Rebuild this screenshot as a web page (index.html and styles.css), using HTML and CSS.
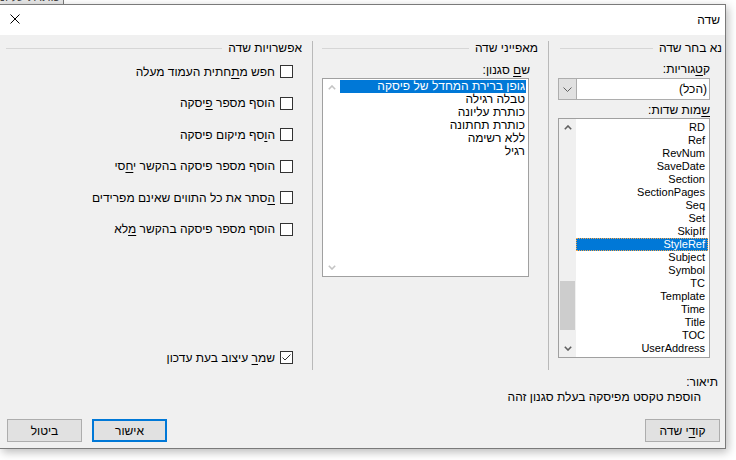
FILE: index.html
```html
<!DOCTYPE html>
<html lang="he">
<head>
<meta charset="utf-8">
<title>שדה</title>
<link rel="stylesheet" href="styles.css">
</head>
<body>
<div class="desk">
  <div class="behind"><div class="behind-tab"><span>כותרת עליונה</span></div></div>
  <div class="dialog" dir="rtl">
    <div class="titlebar">
      <span class="title">שדה</span>
      <span class="close" aria-label="סגור">
        <svg width="10" height="10" viewBox="0 0 10 10"><path d="M0.5 0.5 L9.5 9.5 M9.5 0.5 L0.5 9.5" stroke="#000" stroke-width="1" fill="none"/></svg>
      </span>
    </div>
    <div class="content">
      <div class="columns">
        <section class="col col-field">
          <div class="group-head"><span>נא בחר שדה</span><i></i></div>
          <div class="label label-cat">ק<u>ט</u>גוריות:</div>
          <div class="combo">
            <span class="combo-value">(הכל)</span>
            <span class="combo-btn"><svg width="9" height="5" viewBox="0 0 9 5"><path d="M0.5 0.5 L4.5 4.5 L8.5 0.5" stroke="#606060" stroke-width="1" fill="none"/></svg></span>
          </div>
          <div class="label label-names"><u>ש</u>מות שדות:</div>
          <div class="listbox list-fields">
            <ul class="items">
              <li>RD</li><li>Ref</li><li>RevNum</li><li>SaveDate</li><li>Section</li><li>SectionPages</li><li>Seq</li><li>Set</li><li>SkipIf</li><li class="sel focus">StyleRef</li><li>Subject</li><li>Symbol</li><li>TC</li><li>Template</li><li>Time</li><li>Title</li><li>TOC</li><li>UserAddress</li>
            </ul>
            <div class="vscroll">
              <span class="sb-btn"><svg width="8" height="5" viewBox="0 0 8 5"><path d="M0.8 4.2 L4 1 L7.2 4.2" stroke="#606060" stroke-width="1.6" fill="none"/></svg></span>
              <span class="sb-track"><span class="sb-thumb"></span></span>
              <span class="sb-btn"><svg width="8" height="5" viewBox="0 0 8 5"><path d="M0.8 0.8 L4 4 L7.2 0.8" stroke="#606060" stroke-width="1.6" fill="none"/></svg></span>
            </div>
          </div>
        </section>

        <section class="col col-props">
          <div class="group-head"><span>מאפייני שדה</span><i></i></div>
          <div class="label label-style">ש<u>ם</u> סגנון:</div>
          <div class="listbox list-styles">
            <ul class="items">
              <li class="sel">גופן ברירת המחדל של פיסקה</li><li>טבלה רגילה</li><li>כותרת עליונה</li><li>כותרת תחתונה</li><li>ללא רשימה</li><li>רגיל</li>
            </ul>
            <div class="vscroll disabled">
              <span class="sb-btn"><svg width="8" height="5" viewBox="0 0 8 5"><path d="M0.8 4.2 L4 1 L7.2 4.2" stroke="#c4c4c4" stroke-width="1.6" fill="none"/></svg></span>
              <span class="sb-track"></span>
              <span class="sb-btn"><svg width="8" height="5" viewBox="0 0 8 5"><path d="M0.8 0.8 L4 4 L7.2 0.8" stroke="#c4c4c4" stroke-width="1.6" fill="none"/></svg></span>
            </div>
          </div>
        </section>

        <section class="col col-options">
          <div class="group-head"><span>אפשרויות שדה</span><i></i></div>
          <div class="options">
            <label class="check"><span class="box"></span><span>חפש מ<u>ת</u>חתית העמוד מעלה</span></label>
            <label class="check"><span class="box"></span><span>הוסף מספר <u>פ</u>יסקה</span></label>
            <label class="check"><span class="box"></span><span>ה<u>ו</u>סף מיקום פיסקה</span></label>
            <label class="check"><span class="box"></span><span>הוסף מספר פיסקה בהקשר י<u>ח</u>סי</span></label>
            <label class="check"><span class="box"></span><span><u>ה</u>סתר את כל התווים שאינם מפרידים</span></label>
            <label class="check"><span class="box"></span><span>הוסף מספר פיסקה בהקשר <u>מ</u>לא</span></label>
            <label class="check keep"><span class="box checked"><svg width="11" height="11" viewBox="0 0 11 11"><path d="M1.5 5.5 L4 8 L9.5 2.5" stroke="#333" stroke-width="1" fill="none"/></svg></span><span>שמ<u>ר</u> עיצוב בעת עדכון</span></label>
          </div>
        </section>
      </div>

      <div class="desc">
        <div class="desc-label">תיאור:</div>
        <div class="desc-text">הוספת טקסט מפיסקה בעלת סגנון זהה</div>
      </div>

      <div class="footer">
        <button class="btn">קו<u>ד</u>י שדה</button>
        <span class="spacer"></span>
        <button class="btn default">אישור</button>
        <button class="btn">ביטול</button>
      </div>
    </div>
  </div>
</div>
</body>
</html>
```

FILE: styles.css
```css
* { box-sizing: border-box; }

html, body { margin: 0; padding: 0; }

body {
  width: 736px;
  height: 460px;
  overflow: hidden;
  background: #ffffff;
  font-family: "Liberation Sans", "DejaVu Sans", sans-serif;
  font-size: 12px;
  color: #000;
}

u { text-decoration: underline; text-underline-offset: 2px; }

/* window underneath the dialog */
.behind { height: 4px; overflow: hidden; }
.behind-tab {
  width: 64px;
  height: 4px;
  background: #e8e8e8;
  border-right: 1px solid #7a7a7a;
  overflow: hidden;
  direction: rtl;
}
.behind-tab span {
  display: block;
  margin-top: -10px;
  padding-right: 3px;
  line-height: 14px;
  white-space: nowrap;
  color: #444;
}

/* dialog frame */
.dialog {
  width: 726px;
  height: 445px;
  border: 1px solid #7a7a7a;
  border-left: none;
  background: #f0f0f0;
  display: flex;
  flex-direction: column;
  box-shadow: 2px 3px 9px rgba(0, 0, 0, 0.28);
}

.titlebar {
  height: 30px;
  flex: none;
  background: #ffffff;
  display: flex;
  align-items: center;
  justify-content: space-between;
  padding: 0 5px 0 10px;
}
.title { font-size: 12px; line-height: 14px; }
.close { width: 10px; height: 10px; display: block; margin-top: -2px; }
.close svg { display: block; }

.content {
  flex: 1;
  padding-top: 6px;
  display: flex;
  flex-direction: column;
}

.columns {
  height: 329px;
  display: flex;
}

.col {
  display: flex;
  flex-direction: column;
}

/* group caption with a rule running to the far side */
.group-head {
  height: 14px;
  line-height: 14px;
  display: flex;
  align-items: center;
  white-space: nowrap;
}
.group-head i {
  flex: 1;
  height: 1px;
  background: #d6d6d6;
  margin-right: 6px;
}

.label { line-height: 14px; white-space: nowrap; }

/* --- field names column --- */
.col-field {
  width: 177px;
  border-left: 1px solid #b9b9b9;
  padding-left: 9px;
}
.col-field .group-head { margin-right: 3px; margin-left: 2px; }
.col-field .label { margin-right: 15px; }
.label-cat { margin-top: 7px; }
.label-names { margin-top: 3px; }

.combo {
  margin-top: 2px;
  margin-right: 15px;
  width: 152px;
  height: 22px;
  border: 1px solid #adadad;
  background: #fff;
  display: flex;
  align-items: center;
  justify-content: space-between;
}
.combo-value { padding-right: 2px; line-height: 14px; }
.combo-btn {
  width: 18px;
  height: 20px;
  background: #e1e1e1;
  border-right: 1px solid #adadad;
  display: flex;
  align-items: center;
  justify-content: center;
}
.combo-btn svg { display: block; }

.listbox {
  border: 1px solid #a0a0a0;
  background: #fff;
  display: flex;
}
.items {
  list-style: none;
  margin: 0;
  padding: 0;
  flex: 1;
}
.items li {
  height: 13px;
  line-height: 13px;
  white-space: nowrap;
}
.items li.sel { background: #0078d7; color: #fff; }
.items li.focus { outline: 1px dotted #f5a54a; outline-offset: -1px; }

.list-fields {
  margin-top: 1px;
  margin-right: 15px;
  width: 152px;
  height: 240px;
}
.list-fields .items { padding: 2px 0 0 0; margin-right: 1px; font-size: 11px; }
.list-fields .items li { padding-right: 3px; }

.vscroll {
  width: 17px;
  flex: none;
  display: flex;
  flex-direction: column;
  background: #f0f0f0;
}
.vscroll.disabled { background: #fff; }
.sb-btn {
  height: 17px;
  flex: none;
  display: flex;
  align-items: center;
  justify-content: center;
}
.sb-btn svg { display: block; }
.sb-track { flex: 1; display: flex; flex-direction: column; align-items: center; }
.sb-thumb {
  width: 15px;
  height: 49px;
  margin-top: 145px;
  background: #cdcdcd;
}

/* --- field properties column --- */
.col-props {
  width: 236px;
  border-left: 1px solid #b9b9b9;
  padding-left: 9px;
}
.col-props .group-head { margin-right: 10px; }
.label-style { margin-top: 8px; margin-right: 18px; }
.list-styles {
  margin-top: 1px;
  margin-right: 19px;
  height: 199px;
}
.list-styles .items { padding-top: 1px; margin-right: 2px; }
.list-styles .items li { padding-right: 1px; }

/* --- field options column --- */
.col-options {
  width: 312px;
  padding: 0 10px 0 6px;
}
.options {
  flex: 1;
  display: flex;
  flex-direction: column;
  gap: 15.5px;
  padding-top: 8.5px;
  padding-bottom: 4.5px;
}
.check {
  height: 16px;
  display: flex;
  align-items: center;
  gap: 5px;
  margin-right: 9px;
  white-space: nowrap;
  line-height: 14px;
}
.box {
  width: 13px;
  height: 13px;
  flex: none;
  border: 1px solid #333;
  background: #fff;
  display: flex;
  align-items: center;
  justify-content: center;
}
.box svg { display: block; }
.check.keep { margin-top: auto; }

/* --- description --- */
.desc { margin-top: 5px; line-height: 14px; }
.desc-label { padding-right: 7px; }
.desc-text { padding-right: 24px; margin-top: 1px; }

/* --- buttons --- */
.footer {
  margin-top: 15px;
  display: flex;
  align-items: center;
  gap: 10px;
  padding: 0 5px 0 7px;
}
.spacer { flex: 1; }
.btn {
  width: 75px;
  height: 23px;
  padding: 0;
  border: 1px solid #adadad;
  background: #e1e1e1;
  font-family: inherit;
  font-size: 12px;
  color: #000;
}
.btn.default { border: 2px solid #0078d7; }
```
